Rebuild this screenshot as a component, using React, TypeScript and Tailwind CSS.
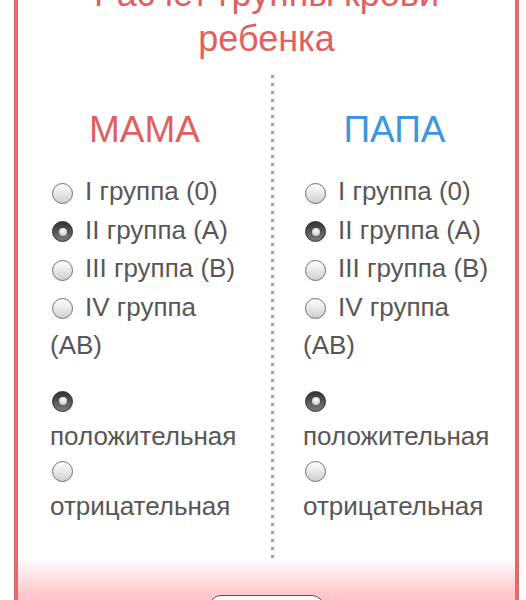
import React from 'react'

const font = { fontFamily: '"Liberation Sans", Arial, sans-serif' }

function Radio({ checked }: { checked?: boolean }) {
    return checked ? (
        <span className="ml-[2px] mr-[12px] inline-flex h-[21px] w-[21px] items-center justify-center rounded-full border border-[#2a2a2a] bg-[linear-gradient(to_bottom,#333333,#7a7a7a)] align-middle">
            <span className="h-[8px] w-[8px] rounded-full bg-[radial-gradient(circle_at_50%_35%,#ffffff,#b8b8b8)]" />
        </span>
    ) : (
        <span className="ml-[2px] mr-[12px] inline-block h-[21px] w-[21px] rounded-full border border-[#6e6e6e] bg-[linear-gradient(to_bottom,#ffffff,#cfcfcf)] align-middle" />
    )
}

const groups = ['I группа (0)', 'II группа (A)', 'III группа (B)', 'IV группа (AB)']

function Parent({ title, color, pad }: { title: string; color: string; pad: string }) {
    return (
        <div className="pt-[33px]">
            <h2 className={`text-center text-[37px] leading-[44px] ${color}`}>{title}</h2>

            <div className={pad}>
                <div className="mt-[20px] w-[194px] text-[26px] leading-[38.5px] text-[#575757]">
                    {groups.map((g, i) => (
                        <label key={g} className="block">
                            <Radio checked={i === 1} />
                            {g}
                        </label>
                    ))}
                </div>

                <div className="mt-[19px] w-[194px] text-[26px] leading-[35px] text-[#575757]">
                    <div className="flex h-[35px] items-center">
                        <Radio checked />
                    </div>
                    <div>положительная</div>
                    <div className="flex h-[35px] items-center">
                        <Radio />
                    </div>
                    <div>отрицательная</div>
                </div>
            </div>
        </div>
    )
}

export default function App() {
    return (
        <div className="h-[600px] w-[526px] overflow-hidden bg-white" style={font}>
            <div className="ml-[14px] mt-[-44px] w-[505px] border-4 border-[#e4686c]">
                <h1 className="pt-[11px] text-center text-[36px] leading-[45px] text-[#e15f61]">
                    <span className="block">Расчет группы крови</span>
                    <span className="block">ребенка</span>
                </h1>

                <div className="mt-[14px] flex h-[483px]">
                    <div className="w-[253px]">
                        <Parent title="МАМА" color="text-[#e15f61]" pad="pl-[32px]" />
                    </div>
                    <div className="w-[3px] bg-[linear-gradient(to_bottom,#9d9d9d_3px,transparent_3px)] bg-[length:3px_8px]" />
                    <div className="w-[241px]">
                        <Parent title="ПАПА" color="text-[#3c97e0]" pad="pl-[29px]" />
                    </div>
                </div>

                <div className="h-[80px] bg-[linear-gradient(to_bottom,#ffffff,#ffc7cb_45%,#ffc3c7)] pt-[37px]">
                    <div className="mx-auto h-[40px] w-[115px] rounded-[12px] border border-[#555] bg-white" />
                </div>
            </div>
        </div>
    )
}
